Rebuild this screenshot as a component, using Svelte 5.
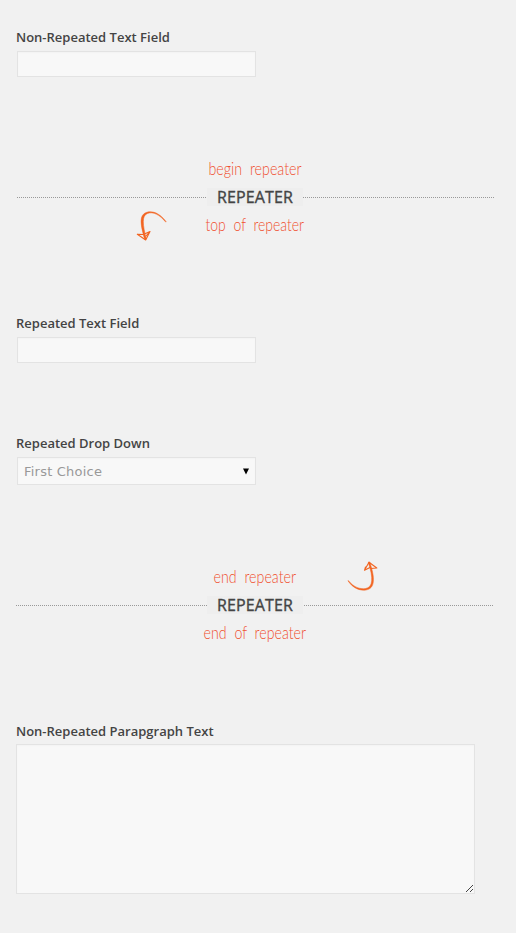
<script>
  const begin = { above: 'begin repeater', aboveX: 208.5, aboveW: 93, below: 'top of repeater', belowX: 205.5, belowW: 98.5 };
  const end = { above: 'end repeater', aboveX: 213.5, aboveW: 82.5, below: 'end of repeater', belowX: 203.5, belowW: 102.5 };
</script>

{#snippet note(text, x, width)}
  <svg class="note" width="516" height="28" viewBox="0 0 516 28">
    <text {x} y="20" textLength={width} lengthAdjust="spacingAndGlyphs">{text}</text>
  </svg>
{/snippet}

{#snippet divider(d, kind)}
  <section class="repeater {kind}">
    {@render note(d.above, d.aboveX, d.aboveW)}
    <div class="rule">
      <span class="dots left"></span>
      <h2>REPEATER</h2>
      <span class="dots right"></span>
    </div>
    {@render note(d.below, d.belowX, d.belowW)}
    {#if kind === 'begin'}
      <svg class="arrow" width="60" height="50" viewBox="0 0 60 50">
        <path class="fill" d="M46 21.500C40 13.500 33 10.500 27 12.200C18.500 14.500 20.500 25 24.800 39.500L26.300 39C22.800 25 21.500 15.500 27.500 13.400C33 11.500 39.500 14.500 45.500 21.800Z" />
        <path class="thin" d="M23.500 34.500L17.300 34.300L25.700 40L30 31.500L25.500 33.500M29.500 32L26 36" />
      </svg>
    {:else}
      <svg class="arrow" width="60" height="50" viewBox="0 0 60 50">
        <path class="fill" d="M13.500 30.700C19 37.500 25 39.300 30.500 38.500C38 37.500 38.500 28 33.300 12.500L34.700 12C40 27.500 40.500 38.500 31 40C24.500 41 18 38 13.200 31.200Z" />
        <path class="thin" d="M36 18.500L41.800 18L34 12.200L29.500 20.300L35 17.500M30.500 17L29.500 20.300" />
      </svg>
    {/if}
  </section>
{/snippet}

<main>
  <div class="field first">
    <label for="plain">Non-Repeated Text Field</label>
    <input id="plain" type="text" />
  </div>

  {@render divider(begin, 'begin')}

  <div class="field text">
    <label for="repeated">Repeated Text Field</label>
    <input id="repeated" type="text" />
  </div>

  <div class="field choice">
    <label for="choice">Repeated Drop Down</label>
    <button id="choice" type="button">
      <span>First Choice</span>
      <svg width="8" height="7" viewBox="0 0 8 7"><path d="M1 .5H7L4 6.500Z" /></svg>
    </button>
  </div>

  {@render divider(end, 'end')}

  <div class="field paragraph">
    <label for="paragraph">Non-Repeated Parapgraph Text</label>
    <div class="area" id="paragraph" role="textbox" tabindex="-1">
      <svg width="9" height="9" viewBox="0 0 9 9" shape-rendering="crispEdges">
        {#each [0, 1, 2, 3, 4, 5, 6] as i}
          <rect x={1 + i} y={7 - i} width="1" height="1" />
        {/each}
        {#each [0, 1, 2] as i}
          <rect x={5 + i} y={7 - i} width="1" height="1" />
        {/each}
      </svg>
    </div>
  </div>
</main>

<style>
  :global(body) {
    background: #f1f1f1;
  }
  main {
    box-sizing: border-box;
    width: 516px;
    height: 933px;
    padding-top: 28px;
    overflow: hidden;
    display: flex;
    flex-direction: column;
    background: #f1f1f1;
    font-family: 'Open Sans', 'Noto Sans', sans-serif;
    color: #444;
  }
  .field {
    display: flex;
    flex-direction: column;
    padding-left: 16px;
  }
  label {
    height: 18px;
    line-height: 18px;
    margin-bottom: 5px;
    font-size: 13px;
    font-weight: 600;
    white-space: nowrap;
  }
  input,
  button,
  .area {
    box-sizing: border-box;
    width: 239px;
    height: 26px;
    margin: 0 0 0 1px;
    padding: 0 6px;
    border: 1px solid #e3e3e3;
    border-radius: 0;
    background: #f8f8f8;
    box-shadow: inset 0 1px 1px #f3f3f3;
    outline: 0;
  }
  button {
    height: 28px;
    padding-right: 5px;
    display: flex;
    align-items: center;
    justify-content: space-between;
    font: 13px 'DejaVu Sans', sans-serif;
    letter-spacing: 0.22px;
    color: #999;
  }
  .area {
    width: 459px;
    height: 150px;
    margin-left: 0;
    padding: 0;
    display: flex;
    align-items: flex-end;
    justify-content: flex-end;
  }
  .area svg {
    fill: #444;
  }
  .repeater {
    position: relative;
    display: flex;
    flex-direction: column;
    margin-top: 78px;
  }
  .note {
    display: block;
  }
  .note text {
    font: 300 18px Lato, 'Open Sans', sans-serif;
    word-spacing: 5px;
    fill: #f0502f;
  }
  .rule {
    display: flex;
    align-items: center;
    height: 28px;
    padding-left: 17px;
  }
  .end .rule {
    padding-left: 16px;
  }
  .dots {
    height: 1px;
    background: repeating-linear-gradient(90deg, #999 0 1px, transparent 1px 2px);
  }
  .left {
    width: 190px;
  }
  .end .left {
    width: 191px;
  }
  .right {
    width: 191px;
  }
  .end .right {
    width: 189px;
    margin-left: 1px;
  }
  h2 {
    width: 96px;
    height: 18px;
    line-height: 18px;
    margin: 0;
    background: #eee;
    text-align: center;
    font-size: 16px;
    font-weight: 500;
    letter-spacing: 0.1px;
    -webkit-text-stroke: 0.35px #444;
  }
  .arrow {
    position: absolute;
    left: 120px;
    top: 45px;
  }
  .end .arrow {
    left: 335px;
    top: -13px;
  }
  .fill,
  .thin {
    stroke: #f26522;
    stroke-width: 0.5;
    stroke-linejoin: round;
    stroke-linecap: round;
  }
  .fill {
    fill: #f26522;
  }
  .thin {
    fill: none;
    stroke-width: 1.1;
  }
  .text {
    margin-top: 75px;
  }
  .choice {
    margin-top: 71px;
  }
  .end {
    margin-top: 78px;
  }
  .paragraph {
    margin-top: 75px;
  }
  .paragraph label {
    margin-bottom: 4px;
  }
</style>
